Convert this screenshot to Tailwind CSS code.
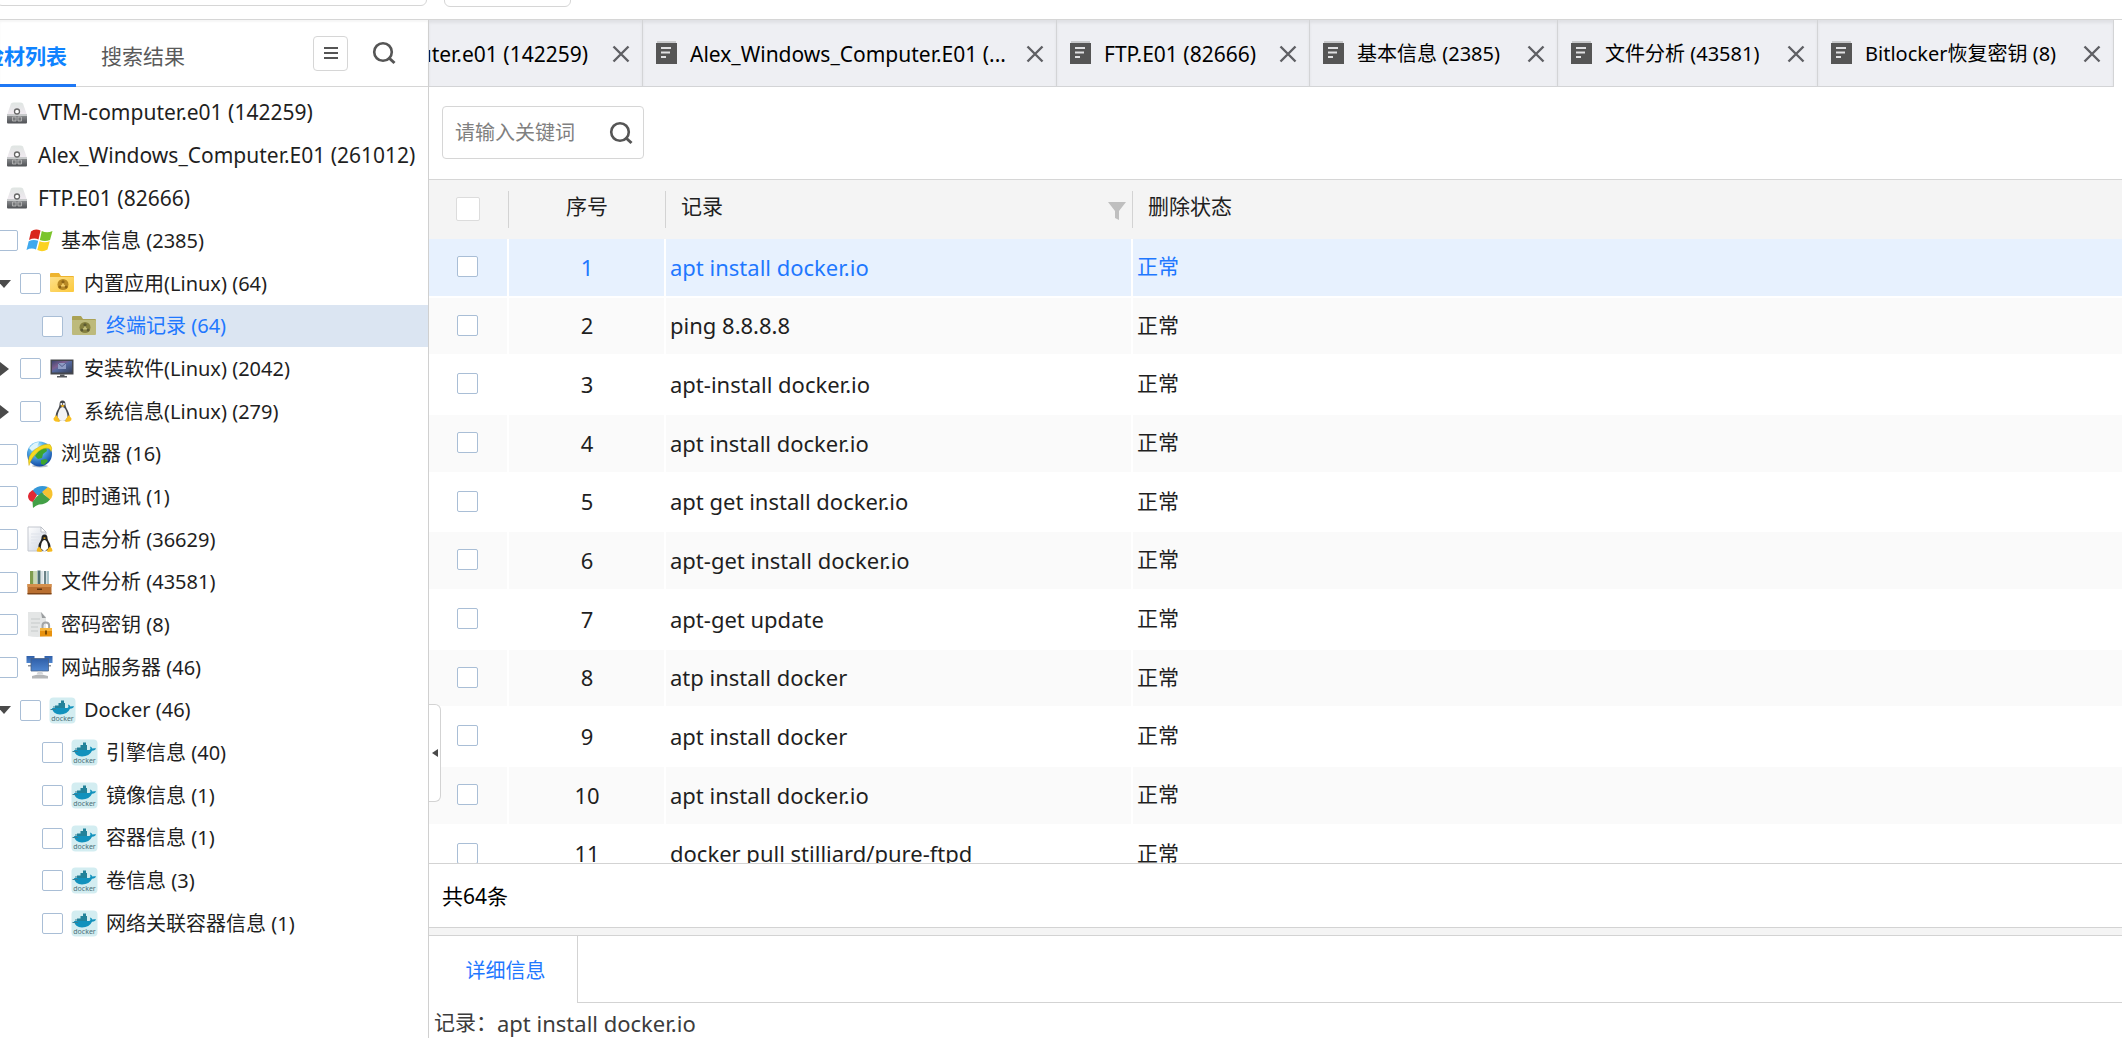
<!DOCTYPE html>
<html lang="zh-CN">
<head>
<meta charset="utf-8">
<title>终端记录</title>
<script src="https://cdn.jsdelivr.net/npm/@tailwindcss/browser@4"></script>
</head>
<body class="flex h-screen flex-col overflow-hidden bg-white font-['Noto_Sans','Noto_Sans_CJK_SC',sans-serif] text-[20px] leading-none text-[#1f1f1f]">

<svg class="absolute size-0" aria-hidden="true">
  <defs>
    <linearGradient id="dome" x1="0" y1="0" x2="0" y2="1"><stop offset="0" stop-color="#dfe5e2"/><stop offset="1" stop-color="#f1eaf1"/></linearGradient>
    <linearGradient id="base" x1="0" y1="0" x2="0" y2="1"><stop offset="0" stop-color="#96989a"/><stop offset="1" stop-color="#4e5054"/></linearGradient>
    <linearGradient id="gold" x1="0" y1="0" x2="1" y2="1"><stop offset="0" stop-color="#fde08a"/><stop offset="1" stop-color="#fcc93c"/></linearGradient>
    <linearGradient id="screen" x1="0" y1="0" x2="1" y2="1"><stop offset="0" stop-color="#3d4670"/><stop offset=".35" stop-color="#7d5f8f"/><stop offset=".5" stop-color="#54699f"/><stop offset="1" stop-color="#37415c"/></linearGradient>
    <linearGradient id="paper" x1="0" y1="0" x2="1" y2="1"><stop offset="0" stop-color="#ffffff"/><stop offset="1" stop-color="#ccd3e0"/></linearGradient>
    <radialGradient id="globe" cx=".4" cy=".25" r=".8"><stop offset="0" stop-color="#e6fbff"/><stop offset=".35" stop-color="#5cb8ee"/><stop offset="1" stop-color="#0b3f9e"/></radialGradient>
    <linearGradient id="blue" x1="0" y1="0" x2="0" y2="1"><stop offset="0" stop-color="#2f5fa8"/><stop offset="1" stop-color="#4f86d0"/></linearGradient>
  </defs>
  <symbol id="disk" viewBox="0 0 22 22">
    <path d="M5 1.500Q6 .5 8 .5h6q2 0 3 1L21 13H1z" fill="url(#dome)"/>
    <path d="M1 12h20v8.500q0 1-1 1H2q-1 0-1-1z" fill="url(#base)"/>
    <path d="M1 12h20v2H1z" fill="#c8cacb"/>
    <circle cx="11" cy="9.500" r="2.500" fill="#fff" stroke="#666" stroke-width="1.300"/>
    <path d="M6.500 15h3.500v4H6.500zM12 15h3.500v4H12z" fill="#77797b" stroke="#bdbdbd" stroke-width=".8"/>
  </symbol>
  <symbol id="win" viewBox="0 0 27 27">
    <path d="M5 4.500Q9 1 14.500 3.500L12.500 12.500Q8 10.500 3 13z" fill="#d9261c"/>
    <path d="M15.800 4Q21 6.500 26.500 4L24 13Q19 15 13.800 13z" fill="#7cc42c"/>
    <path d="M2.700 14.200Q7.500 11.800 12.200 13.800L10 22.500Q5.500 20.500 .5 23z" fill="#3fa9ee"/>
    <path d="M13.500 14.200Q18.500 16.500 23.700 14.200L21.500 22.500Q16.500 25.500 11.300 23z" fill="#fbd223"/>
  </symbol>
  <symbol id="folder" viewBox="0 0 27 27">
    <path d="M1 4q0-1 1-1h8l2 3h12q1 0 1 1v3H1z" fill="#eeb42f"/>
    <path d="M1 7h23q1 0 1 1v13q0 1-1 1H2q-1 0-1-1z" fill="url(#gold)"/>
    <circle cx="14" cy="14.500" r="5.500" fill="#b98a26"/>
    <path d="M14 11.500v3.500l-3.200 2.500M14 15l3.200 2.500" stroke="#f5cf6a" stroke-width="1.600" fill="none"/>
    <circle cx="14" cy="11.800" r="1.600" fill="#8f6415"/><circle cx="11" cy="17" r="1.600" fill="#8f6415"/><circle cx="17" cy="17" r="1.600" fill="#8f6415"/>
  </symbol>
  <symbol id="folder-sel" viewBox="0 0 27 27">
    <path d="M1 4q0-1 1-1h8l2 3h12q1 0 1 1v3H1z" fill="#aaa255"/>
    <path d="M1 7h23q1 0 1 1v13q0 1-1 1H2q-1 0-1-1z" fill="#bdba7c"/>
    <circle cx="14" cy="14.500" r="5.500" fill="#85803f"/>
    <path d="M14 11.500v3.500l-3.200 2.500M14 15l3.200 2.500" stroke="#c5c07c" stroke-width="1.600" fill="none"/>
    <circle cx="14" cy="11.800" r="1.600" fill="#5d5b33"/><circle cx="11" cy="17" r="1.600" fill="#5d5b33"/><circle cx="17" cy="17" r="1.600" fill="#5d5b33"/>
  </symbol>
  <symbol id="screen-i" viewBox="0 0 27 27">
    <path d="M1.500 4.500h23v15h-23z" fill="#45474d"/>
    <path d="M3 6h20v11.500H3z" fill="url(#screen)"/>
    <path d="M9 8h8v6H9z" fill="#8f9cc4"/><path d="M9 8l4 3.500L17 8" stroke="#55618e" fill="none"/>
    <path d="M11 19.500h4.500V21H18v1.500H8V21h3z" fill="#55575c"/>
  </symbol>
  <symbol id="tux" viewBox="0 0 27 27">
    <path d="M13.500 2.500q3 0 3 4c0 4 4 6.500 4 13l-3.500 3h-7l-3.500-3c0-6.500 4-9 4-13q0-4 3-4z" fill="#45484e"/>
    <path d="M13.500 9q2 0 3 2.500c1 2.500 2 4 2 7.500q-1.500 4-5 4t-5-4c0-3.500 1-5 2-7.500q1-2.500 3-2.500z" fill="#f4f4f4"/>
    <circle cx="12.300" cy="6" r="1" fill="#fff"/><circle cx="14.900" cy="6" r="1" fill="#fff"/>
    <path d="M11.500 7.800l2-1 2.200 1-2 1.500z" fill="#f3b31c"/>
    <path d="M7 17q-1.500 2-2.500 3.500-.5 2 2 3l4 .5q1-2-3.500-7zM20 17q1.500 2 2.500 3.500.5 2-2 3l-4 .5q-1-2 3.500-7z" fill="#f9c020"/>
  </symbol>
  <symbol id="web" viewBox="0 0 27 27">
    <ellipse cx="14" cy="25" rx="8" ry="1.500" fill="#b9c0c8"/>
    <circle cx="13.500" cy="13" r="12.500" fill="url(#globe)"/>
    <path d="M13 9q3-4 7-3l1 4-4 3-1 4-4 1-3-3zM15 19l5-1 2 2-4 4-3-1z" fill="#3da52c"/>
    <path d="M3 7q5-6 10-6l-2 5-5 4z" fill="#dff5fb"/>
    <path d="M3 24.500Q.5 15 9 8.500T24 3.500Q27 7 25 10.500 24 6 18 7.500T6.500 17Q4 21 3 24.500z" fill="#f6da1f" stroke="#bf9b00" stroke-width=".4"/>
  </symbol>
  <symbol id="chat" viewBox="0 0 27 27">
    <path d="M7 7Q13 1 22 4l-6 9-9-2z" fill="#3597d8"/>
    <path d="M22 4q5 2 4.500 8-.5 3-3 5L16 9z" fill="#f6c22f"/>
    <path d="M6.500 7L11 12 7 19q-5-1-5-6 1-4 4.500-6z" fill="#e02a35"/>
    <path d="M15.500 9.500l8.500 7q-4 5-11 5-3 .5-6 3.500l-.500-6q3-5 9-9.500z" fill="#43a047"/>
  </symbol>
  <symbol id="log" viewBox="0 0 27 27">
    <path d="M2 1h13l5 5v19H2z" fill="url(#paper)" stroke="#c3c7cf"/>
    <path d="M15 1v5h5z" fill="#fff" stroke="#b5b9c0" stroke-width=".8"/>
    <path d="M5 8h10M5 11h9M5 14h7M5 17h6" stroke="#dfe3ea"/>
    <path d="M18.500 8.500q3 0 3 3.500c0 3 3.500 5 3 9.500l-2.500 3h-7l-2.500-3c-.5-4.500 3-6.500 3-9.500q0-3.500 3-3.500z" fill="#222"/>
    <path d="M18.500 14q2 0 3 3.500t.5 5l-3 2.500h-1l-3-2.500q-.5-1.500.5-5T18.500 14z" fill="#fff"/>
    <path d="M17 12l1.500-.8 1.500.8-1.500 1z" fill="#f3b31c"/>
    <path d="M13 20.500l3 3.500-.5 2-4.500-.5q-1-2 2-5zM24 20.500L21 24l.5 2 4.500-.5q1.500-2-2-5z" fill="#f5b81d"/>
  </symbol>
  <symbol id="files" viewBox="0 0 27 27">
    <path d="M4 2h3.500v15H4z" fill="#7f9c4d"/><path d="M8 2h3v15H8z" fill="#c9d8b4"/><path d="M11.500 1.500h3V17h-3z" fill="#4f6f72"/><path d="M15 2h2.500v15H15z" fill="#dce5e8"/><path d="M18 2h2v15h-2z" fill="#6b8287"/><path d="M20.500 2H23v15h-2.500z" fill="#a9c3c9"/>
    <path d="M1.500 15h24v10h-24z" fill="#b96f31"/><path d="M1.500 15h24v3h-24z" fill="#d58f4c"/><path d="M1.500 24h24v1.500h-24z" fill="#7e4518"/><path d="M11 19.500h5v1.500h-5z" fill="#5e3310"/>
  </symbol>
  <symbol id="key" viewBox="0 0 27 27">
    <path d="M2 1h13l5 5v19q-9 2-18 0z" fill="#e4e6e6"/><path d="M15 1l5 6h-4z" fill="#9a9d9f"/>
    <path d="M5 8h9M5 12h9M5 16h7M5 20h7" stroke="#cfd3d4" stroke-width="1.500"/>
    <path d="M16.500 18v-3.500q0-3 3.300-3t3.300 3V18" fill="none" stroke="#a2a4a5" stroke-width="2"/>
    <path d="M14 17h12v8.500H14z" fill="#e8920f"/><path d="M14 17h12v3H14z" fill="#f6b53e"/><path d="M19 19.500h2v4h-2z" fill="#7d4a00"/>
  </symbol>
  <symbol id="server" viewBox="0 0 27 27">
    <path d="M.5 2h8v7h-8zM18.500 2h8v7h-8z" fill="url(#blue)"/><path d="M2 11h5v1.500H2zM20 11h5v1.500h-5z" fill="#8b929c"/>
    <path d="M5 4.500h17.500v12.500H5z" fill="url(#blue)" stroke="#4a6285" stroke-width=".8"/>
    <path d="M12 17.500h4l1.500 3h-7z" fill="#d3d5d8"/><path d="M6 22q7.500-2.500 16 0v2.500H6z" fill="#b4b6b8"/>
  </symbol>
  <symbol id="docker" viewBox="0 0 27 27">
    <rect x=".5" y=".5" width="26" height="26" rx="4" fill="#d3edf1"/>
    <path d="M6 8.500h10V11H6zM9.500 6h6.500v2.500H9.500zM12 3.500h3V6h-3z" fill="#22829a"/>
    <path d="M3 11h15.500q1.500-1 .5-3.500 2 .5 2.300 2 2-.5 3.700-.2-.5 2-4 2.500Q18.500 17.500 11 17.500 4 17 3 11z" fill="#1292bd"/>
    <path d="M1.500 12.500H7M4 10h2" stroke="#3a7f93"/>
    <text x="13.500" y="23.500" text-anchor="middle" font-size="7" fill="#4c7078" font-family="Noto Sans">docker</text>
  </symbol>
  <symbol id="lens" viewBox="0 0 24 24"><circle cx="11" cy="11" r="8.800" fill="none" stroke="#555" stroke-width="2.600"/><path d="M16.500 16.500l6 5.500" stroke="#555" stroke-width="3"/></symbol>
  <symbol id="doc" viewBox="0 0 22 24"><path d="M1 0h19v2H1z" fill="#c9cacc"/><path d="M0 2h21v21H0z" fill="#555"/><path d="M5 7h10M5 11.500h9M5 16h5" stroke="#e0e0e2" stroke-width="2"/></symbol>
  <symbol id="close" viewBox="0 0 18 18"><path d="M1.500 1.500l15 15M16.500 1.500l-15 15" stroke="#5f6064" stroke-width="2.400"/></symbol>
</svg>

<header class="flex h-[20px] shrink-0 gap-[17px] overflow-hidden border-b border-[#d6d6d6]">
  <input aria-label="地址" class="-mt-[34px] -ml-[4px] h-[40px] w-[431px] shrink-0 rounded-md border border-[#d6d6d6]">
  <button aria-label="选项" class="-mt-[33px] h-[40px] w-[127px] shrink-0 rounded-md border border-[#d6d6d6]"></button>
</header>

<div class="flex min-h-0 flex-1">
  <aside class="w-[429px] shrink-0 overflow-hidden border-r border-[#d0d0d0]">
    <div class="flex h-[67px] items-stretch border-b border-[#d6d6d6] text-[21px] shadow-[inset_0_2px_2px_rgba(0,0,0,0.04)]">
      <button class="-mb-px -ml-[17px] w-[93px] border-b-3 border-[#1f78f5] pt-[8px] text-left font-bold whitespace-nowrap text-[#0f83ff]">检材列表</button>
      <button class="ml-[25px] pt-[6px] text-[#5a5a5a]">搜索结果</button>
      <div class="ml-auto flex items-center gap-[24px] pr-[32px]">
        <button aria-label="菜单" class="flex size-[35px] items-center justify-center rounded border border-[#d6d6d6]">
          <svg class="size-[14px]" viewBox="0 0 14 14"><path d="M0 2h14M0 7h14M0 12h14" stroke="#555" stroke-width="1.800"/></svg>
        </button>
        <button aria-label="搜索"><svg class="size-[24px]"><use href="#lens"/></svg></button>
      </div>
    </div>
    <ul class="pt-[4px] whitespace-nowrap [&>li]:flex [&>li]:h-[43px] [&>li]:items-center [&>li]:gap-[8px] [&>li:nth-child(3n)]:h-[42px] [&_input]:size-[21px] [&_input]:shrink-0 [&_input]:appearance-none [&_input]:rounded-xs [&_input]:border [&_input]:border-[#a9bed6] [&_input]:bg-white [&_svg]:size-[27px] [&_svg]:shrink-0 [&_label]:flex [&_label]:items-center [&_label]:gap-[8px]">
      <li class="pl-[6px] text-[21px]"><svg class="mr-[2px] !size-[22px]"><use href="#disk"/></svg>VTM-computer.e01 (142259)</li>
      <li class="pl-[6px] text-[21px]"><svg class="mr-[2px] !size-[22px]"><use href="#disk"/></svg>Alex_Windows_Computer.E01 (261012)</li>
      <li class="pl-[6px] text-[21px]"><svg class="mr-[2px] !size-[22px]"><use href="#disk"/></svg>FTP.E01 (82666)</li>
      <li class="-ml-[3px]"><label><input type="checkbox"><svg><use href="#win"/></svg>基本信息 (2385)</label></li>
      <li class="-ml-[3px]"><button aria-label="折叠" class="mr-[1px] size-0 border-x-7 border-t-8 border-x-transparent border-t-[#4a4a4a]"></button><label><input type="checkbox"><svg><use href="#folder"/></svg>内置应用(Linux) (64)</label></li>
      <li class="bg-[#dbe5f2] pl-[42px] text-[#1f78ff]"><label><input type="checkbox"><svg><use href="#folder-sel"/></svg>终端记录 (64)</label></li>
      <li><button aria-label="展开" class="mr-[3px] size-0 border-y-7 border-l-9 border-y-transparent border-l-[#4a4a4a]"></button><label><input type="checkbox"><svg><use href="#screen-i"/></svg>安装软件(Linux) (2042)</label></li>
      <li><button aria-label="展开" class="mr-[3px] size-0 border-y-7 border-l-9 border-y-transparent border-l-[#4a4a4a]"></button><label><input type="checkbox"><svg><use href="#tux"/></svg>系统信息(Linux) (279)</label></li>
      <li class="-ml-[3px]"><label><input type="checkbox"><svg><use href="#web"/></svg>浏览器 (16)</label></li>
      <li class="-ml-[3px]"><label><input type="checkbox"><svg><use href="#chat"/></svg>即时通讯 (1)</label></li>
      <li class="-ml-[3px]"><label><input type="checkbox"><svg><use href="#log"/></svg>日志分析 (36629)</label></li>
      <li class="-ml-[3px]"><label><input type="checkbox"><svg><use href="#files"/></svg>文件分析 (43581)</label></li>
      <li class="-ml-[3px]"><label><input type="checkbox"><svg><use href="#key"/></svg>密码密钥 (8)</label></li>
      <li class="-ml-[3px]"><label><input type="checkbox"><svg><use href="#server"/></svg>网站服务器 (46)</label></li>
      <li class="-ml-[3px]"><button aria-label="折叠" class="mr-[1px] size-0 border-x-7 border-t-8 border-x-transparent border-t-[#4a4a4a]"></button><label><input type="checkbox"><svg><use href="#docker"/></svg>Docker (46)</label></li>
      <li class="pl-[42px]"><label><input type="checkbox"><svg><use href="#docker"/></svg>引擎信息 (40)</label></li>
      <li class="pl-[42px]"><label><input type="checkbox"><svg><use href="#docker"/></svg>镜像信息 (1)</label></li>
      <li class="pl-[42px]"><label><input type="checkbox"><svg><use href="#docker"/></svg>容器信息 (1)</label></li>
      <li class="pl-[42px]"><label><input type="checkbox"><svg><use href="#docker"/></svg>卷信息 (3)</label></li>
      <li class="pl-[42px]"><label><input type="checkbox"><svg><use href="#docker"/></svg>网络关联容器信息 (1)</label></li>
    </ul>
  </aside>

  <main class="relative flex min-w-0 flex-1 flex-col">
    <nav class="flex h-[67px] shrink-0 whitespace-nowrap text-black [&>div]:flex [&>div]:shrink-0 [&>div]:items-center [&>div]:border-r [&>div]:border-b [&>div]:border-[#d3d4d6] [&>div]:bg-[#eeeff3] [&>div]:pt-[2px] [&>div]:pr-[12px] [&>div]:pl-[13px] [&>div]:shadow-[inset_0_3px_3px_rgba(0,0,0,0.06)] [&_a]:flex [&_a]:items-center [&_a]:gap-[12px] [&_button]:ml-auto [&_a>svg]:mb-[3px] [&_a>svg]:h-[24px] [&_a>svg]:w-[22px] [&_button>svg]:size-[18px]">
      <div class="w-[214px] justify-end overflow-hidden"><a href="#" class="mr-[24px] text-[21px]">VTM-computer.e01 (142259)</a><button aria-label="关闭" class="!ml-0"><svg><use href="#close"/></svg></button></div>
      <div class="w-[414px]"><a href="#" class="text-[21px]"><svg><use href="#doc"/></svg>Alex_Windows_Computer.E01 (...</a><button aria-label="关闭"><svg><use href="#close"/></svg></button></div>
      <div class="w-[253px]"><a href="#" class="text-[21px]"><svg><use href="#doc"/></svg>FTP.E01 (82666)</a><button aria-label="关闭"><svg><use href="#close"/></svg></button></div>
      <div class="w-[248px]"><a href="#"><svg><use href="#doc"/></svg>基本信息 (2385)</a><button aria-label="关闭"><svg><use href="#close"/></svg></button></div>
      <div class="w-[260px]"><a href="#"><svg><use href="#doc"/></svg>文件分析 (43581)</a><button aria-label="关闭"><svg><use href="#close"/></svg></button></div>
      <div class="w-[296px]"><a href="#"><svg><use href="#doc"/></svg>Bitlocker恢复密钥 (8)</a><button aria-label="关闭"><svg><use href="#close"/></svg></button></div>
    </nav>

    <div class="shrink-0 border-b border-[#d6d6d6] px-[13px] pt-[19px] pb-[20px]">
      <div class="flex h-[53px] w-[202px] items-center rounded border border-[#d6d6d6] pr-[10px] pl-[12px]">
        <input aria-label="关键词" placeholder="请输入关键词" class="min-w-0 flex-1 outline-none placeholder:text-[#808080]">
        <button aria-label="搜索"><svg class="size-[24px]"><use href="#lens"/></svg></button>
      </div>
    </div>

    <div class="min-h-0 flex-1 overflow-hidden">
      <table class="w-full table-fixed border-separate border-spacing-0 text-[22px] [&_input]:block [&_input]:size-[21px] [&_input]:appearance-none [&_input]:rounded-xs [&_input]:border [&_input]:border-[#a9bed6] [&_input]:bg-white">
        <colgroup><col class="w-[80px]"><col class="w-[157px]"><col class="w-[467px]"><col></colgroup>
        <thead class="bg-[#f4f4f4] text-[21px] [&_div]:flex [&_div]:h-[37px] [&_div]:items-center [&_div]:border-r [&_div]:border-[#d3d3d3] [&_th]:h-[59px] [&_th]:p-0 [&_th]:font-normal">
          <tr>
            <th><div class="justify-center pr-[1px] pb-[2px]"><input type="checkbox" aria-label="全选" class="!size-[24px] !border-[#dcdcdc]"></div></th>
            <th><div class="justify-center pb-[6px]">序号</div></th>
            <th><div class="justify-between pr-[6px] pb-[6px] pl-[15px]">记录<svg class="mt-[8px] size-[18px]" viewBox="0 0 18 18"><path d="M0 0h18L11 9v9l-4-2V9z" fill="#bfbfbf"/></svg></div></th>
            <th><div class="!border-r-0 pb-[6px] pl-[15px]">删除状态</div></th>
          </tr>
        </thead>
        <tbody class="[&_td]:h-[59px] [&_td]:border-r-2 [&_td]:border-b-2 [&_td]:border-white [&_td]:p-0 [&_td]:pb-[2px] [&_td]:pl-[4px] [&_td:first-child]:pl-[28px] [&_td:nth-child(2)]:pl-[1px] [&_td:nth-child(2)]:text-center [&_td:last-child]:border-r-0 [&_td:last-child]:text-[21px] [&>tr:nth-child(3n+2)>td]:h-[58px] [&>tr:nth-child(even)]:bg-[#fafafa]">
          <tr class="bg-[#e7f1fe] text-[#1f78ff]"><td><input type="checkbox" aria-label="1"></td><td>1</td><td>apt install docker.io</td><td>正常</td></tr>
          <tr><td><input type="checkbox" aria-label="2"></td><td>2</td><td>ping 8.8.8.8</td><td>正常</td></tr>
          <tr><td><input type="checkbox" aria-label="3"></td><td>3</td><td>apt-install docker.io</td><td>正常</td></tr>
          <tr><td><input type="checkbox" aria-label="4"></td><td>4</td><td>apt install docker.io</td><td>正常</td></tr>
          <tr><td><input type="checkbox" aria-label="5"></td><td>5</td><td>apt get install docker.io</td><td>正常</td></tr>
          <tr><td><input type="checkbox" aria-label="6"></td><td>6</td><td>apt-get install docker.io</td><td>正常</td></tr>
          <tr><td><input type="checkbox" aria-label="7"></td><td>7</td><td>apt-get update</td><td>正常</td></tr>
          <tr><td><input type="checkbox" aria-label="8"></td><td>8</td><td>atp install docker</td><td>正常</td></tr>
          <tr><td><input type="checkbox" aria-label="9"></td><td>9</td><td>apt install docker</td><td>正常</td></tr>
          <tr><td><input type="checkbox" aria-label="10"></td><td>10</td><td>apt install docker.io</td><td>正常</td></tr>
          <tr><td><input type="checkbox" aria-label="11"></td><td>11</td><td>docker pull stilliard/pure-ftpd</td><td>正常</td></tr>
        </tbody>
      </table>
    </div>

    <div class="flex h-[65px] shrink-0 items-center border-y border-[#d3d3d3] pt-[2px] pl-[13px] text-[21px] text-black">共64条</div>
    <div class="h-[8px] shrink-0 border-b border-[#d3d3d3] bg-[#f4f4f4]"></div>
    <div class="flex h-[67px] shrink-0">
      <button class="w-[149px] border-r border-[#d3d3d3] pt-[2px] pl-[5px] text-[#1f78ff]">详细信息</button>
      <div class="flex-1 border-b border-[#d3d3d3]"></div>
    </div>
    <p class="flex h-[35px] shrink-0 items-center pt-[4px] pl-[5px] text-[21px] text-[#3c3c3c]">记录：<span class="text-[22px]">apt install docker.io</span></p>

    <button aria-label="收起侧栏" class="absolute top-[684px] left-0 flex h-[98px] w-[12px] items-center justify-center rounded-r-md border border-l-0 border-[#d3d3d3] bg-white"><span class="size-0 border-y-4 border-r-6 border-y-transparent border-r-[#4a4a4a]"></span></button>
  </main>
</div>
</body>
</html>
